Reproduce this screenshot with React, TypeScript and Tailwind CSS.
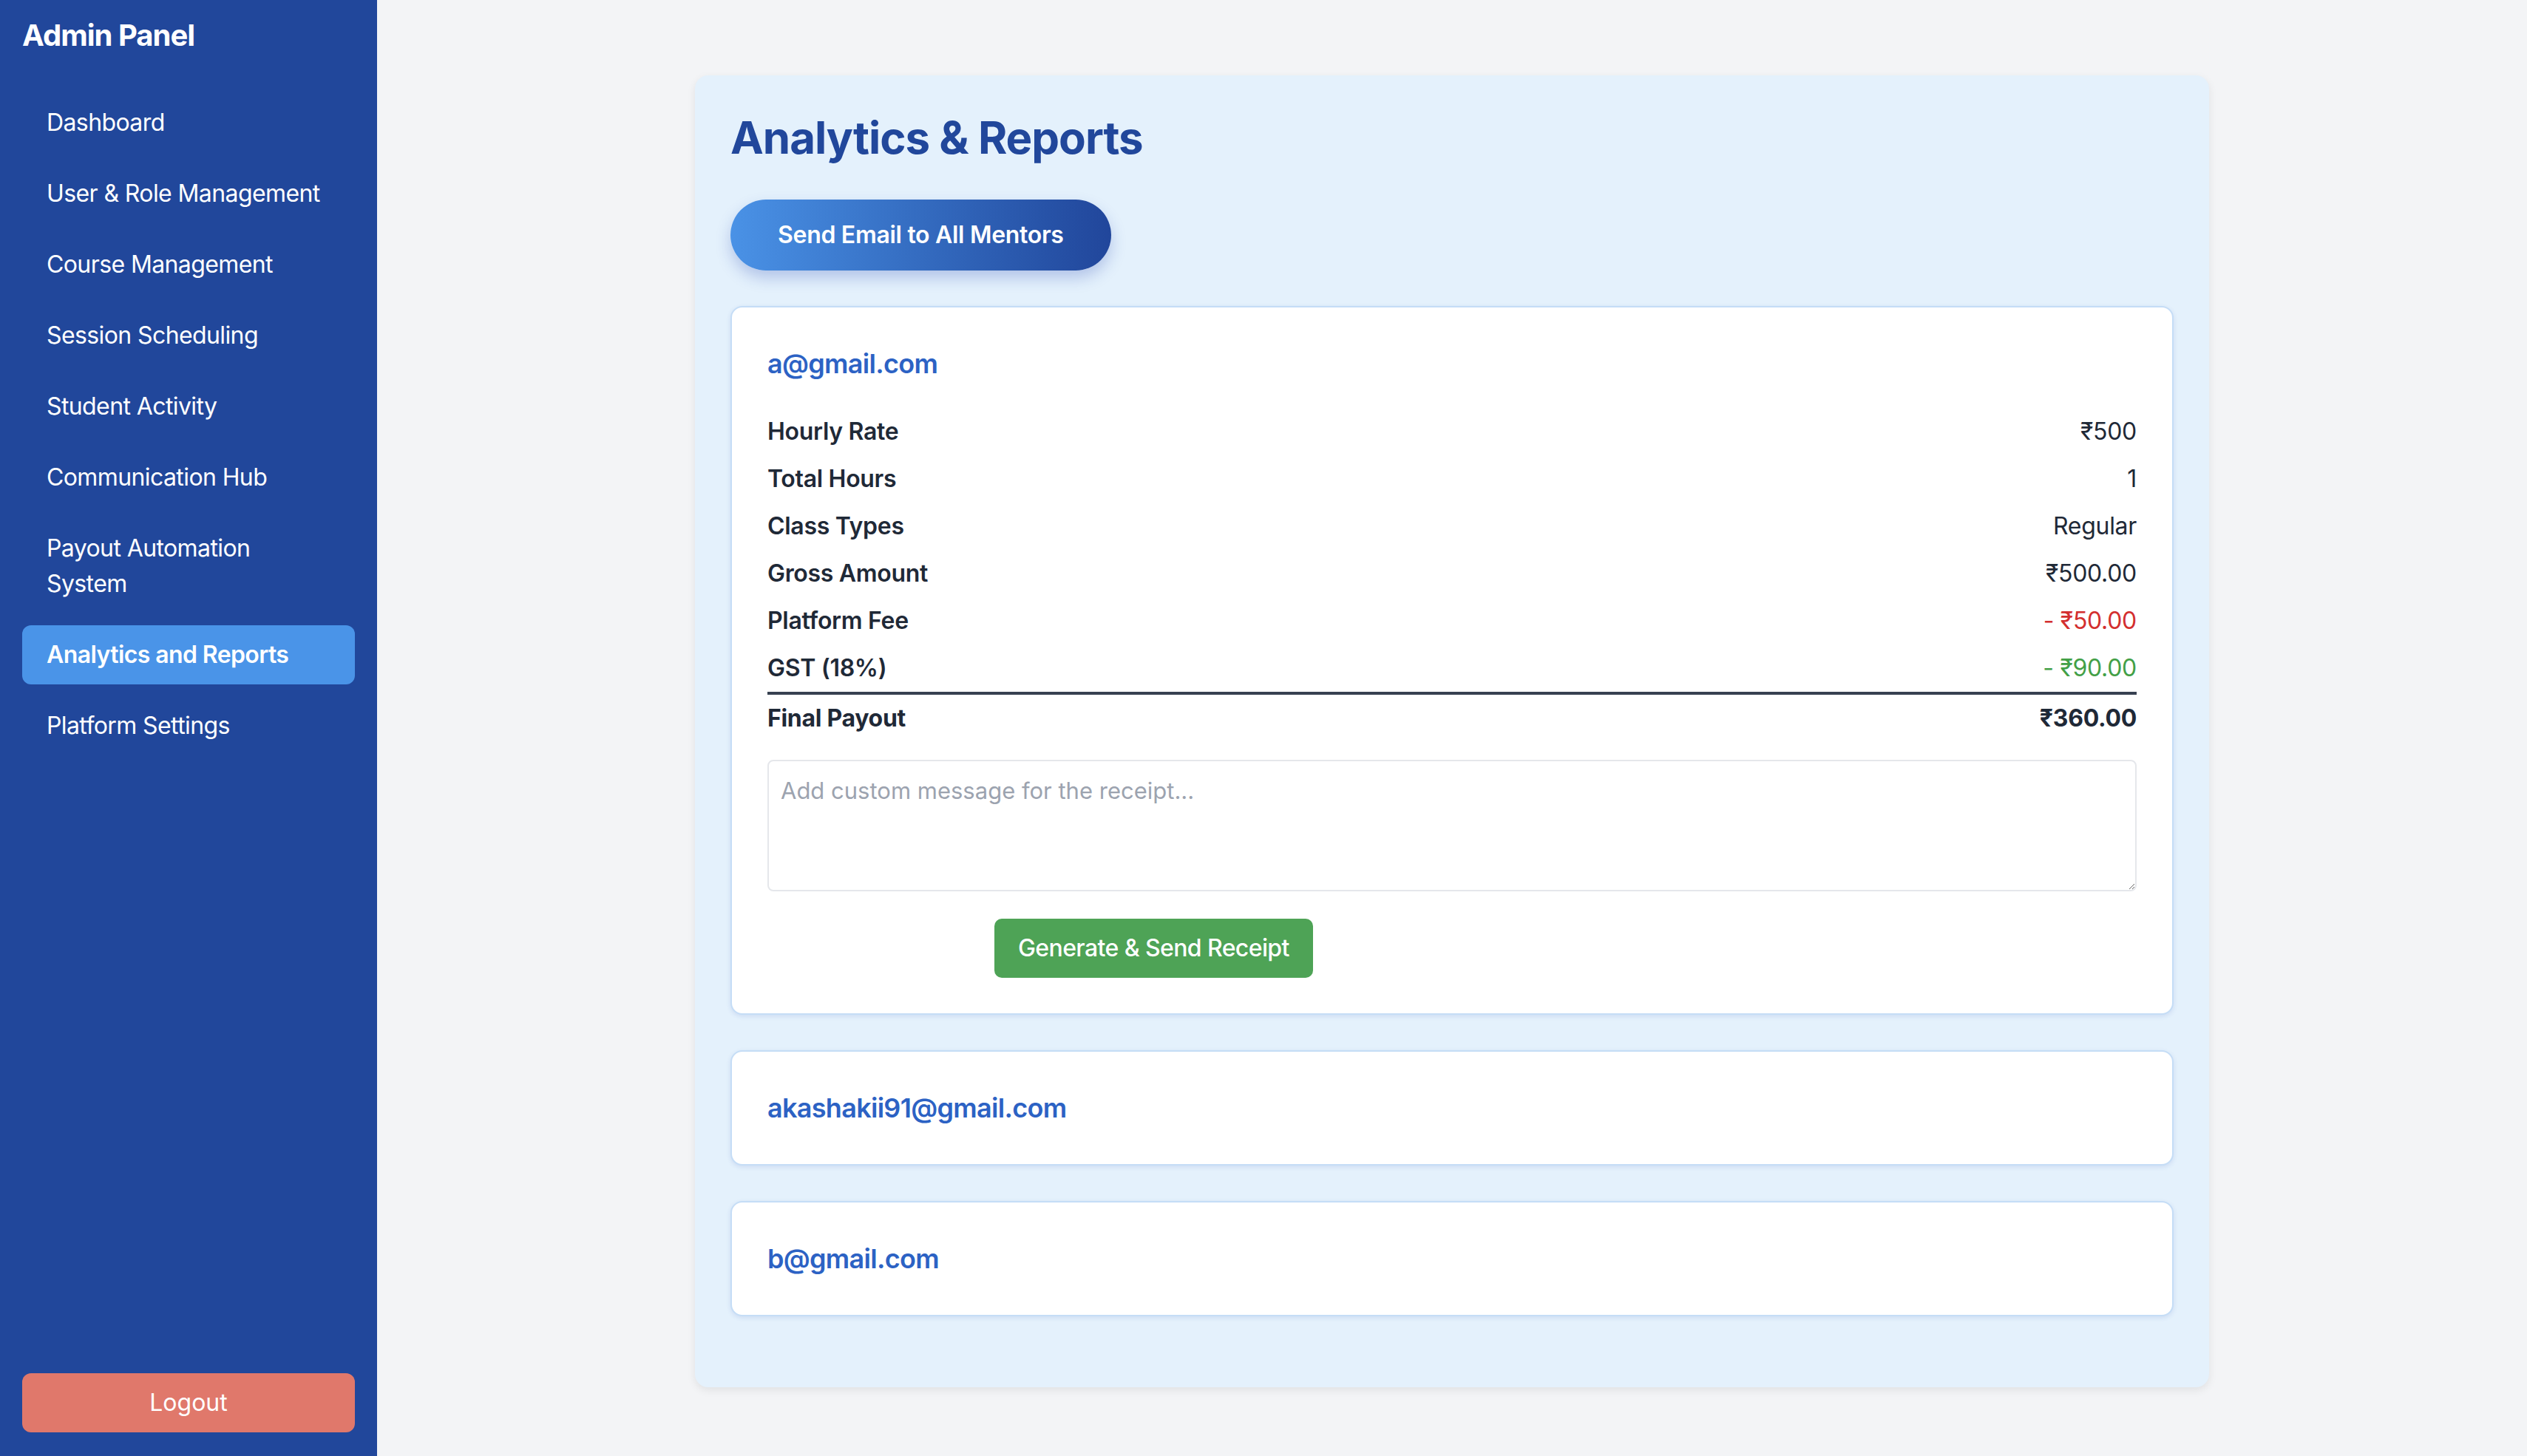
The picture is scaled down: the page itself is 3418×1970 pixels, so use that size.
const navItems = [
	"Dashboard",
	"User & Role Management",
	"Course Management",
	"Session Scheduling",
	"Student Activity",
	"Communication Hub",
	"Payout Automation System",
	"Analytics and Reports",
	"Platform Settings",
]

const rows = [
	{ label: "Hourly Rate", value: "₹500", tone: "text-[#1f2937]" },
	{ label: "Total Hours", value: "1", tone: "text-[#1f2937]" },
	{ label: "Class Types", value: "Regular", tone: "text-[#1f2937]" },
	{ label: "Gross Amount", value: "₹500.00", tone: "text-[#1f2937]" },
	{ label: "Platform Fee", value: "- ₹50.00", tone: "text-[#d32f2f]" },
	{ label: "GST (18%)", value: "- ₹90.00", tone: "text-[#43a047]" },
]

function MentorCard({ email, open }: { email: string; open?: boolean }) {
	return (
		<div className="mb-[48px] rounded-[16px] border-2 border-[#c5ddf6] bg-white p-[48px] shadow-[0_2px_6px_rgba(30,64,175,0.12)]">
			<h3 className="text-[36px] leading-[56px] font-semibold tracking-[-0.7px] text-[#2c62c4]">{email}</h3>
			{open && (
				<div className="mt-[32px]">
					{rows.map((r) => (
						<div key={r.label} className="flex items-center justify-between py-[8px] text-[32px] leading-[48px] tracking-[-0.3px]">
							<span className="font-semibold text-[#1f2937]">{r.label}</span>
							<span className={r.tone}>{r.value}</span>
						</div>
					))}
					<div className="flex items-center justify-between border-t-4 border-[#374151] py-[8px] text-[32px] leading-[48px] font-bold tracking-[-0.3px] text-[#1f2937]">
						<span>Final Payout</span>
						<span>₹360.00</span>
					</div>
					<textarea
						placeholder="Add custom message for the receipt..."
						className="mt-[24px] block h-[178px] w-full rounded-[8px] border-2 border-[#e5e7eb] px-[16px] pt-[18px] text-[31px] leading-[44px] text-[#1f2937] placeholder:text-[#9ca3af] outline-none"
					/>
					<button className="mt-[37px] ml-[307px] h-[80px] rounded-[10px] bg-[#4ea356] px-[32px] text-[32px] leading-[48px] font-medium tracking-[-0.6px] text-white">
						Generate &amp; Send Receipt
					</button>
				</div>
			)}
		</div>
	)
}

export default function App() {
	return (
		<div className="flex min-h-screen bg-[#f3f4f6] font-['Inter','Noto_Sans',sans-serif]">
			<aside className="flex min-h-screen w-[510px] shrink-0 flex-col bg-[#21479b] px-[30px] pt-[20px] pb-[32px] text-white">
				<h1 className="text-[40px] leading-[56px] font-bold tracking-[-1px]">Admin Panel</h1>
				<nav className="mt-[50px] flex flex-col gap-[16px]">
					{navItems.map((item) => (
						<a
							key={item}
							href="#"
							className={`rounded-[12px] px-[33px] py-[16px] text-[32px] leading-[48px] tracking-[-0.6px] ${item === "Analytics and Reports" ? "bg-[#4a94e8] font-semibold" : ""}`}
						>
							{item}
						</a>
					))}
				</nav>
				<button className="mt-auto h-[80px] w-full rounded-[12px] bg-[#e0786b] text-[32px] text-white">Logout</button>
			</aside>
			<main className="flex-1 pt-[102px] pb-[91px]">
				<div className="mx-auto w-[2048px] rounded-[18px] bg-[#e4f1fc] p-[48px] shadow-[0_4px_12px_rgba(0,0,0,0.08)]">
					<h2 className="text-[60px] leading-[72px] font-bold tracking-[-1px] text-[#21479b]">Analytics &amp; Reports</h2>
					<button className="mt-[48px] mb-[48px] h-[96px] rounded-full bg-gradient-to-r from-[#4a92e6] to-[#21469b] px-[64px] text-[32px] leading-[48px] font-semibold tracking-[-0.3px] text-white shadow-[0_10px_20px_rgba(30,64,175,0.25)]">
						Send Email to All Mentors
					</button>
					<MentorCard email="a@gmail.com" open />
					<MentorCard email="akashakii91@gmail.com" />
					<MentorCard email="b@gmail.com" />
				</div>
			</main>
		</div>
	)
}
